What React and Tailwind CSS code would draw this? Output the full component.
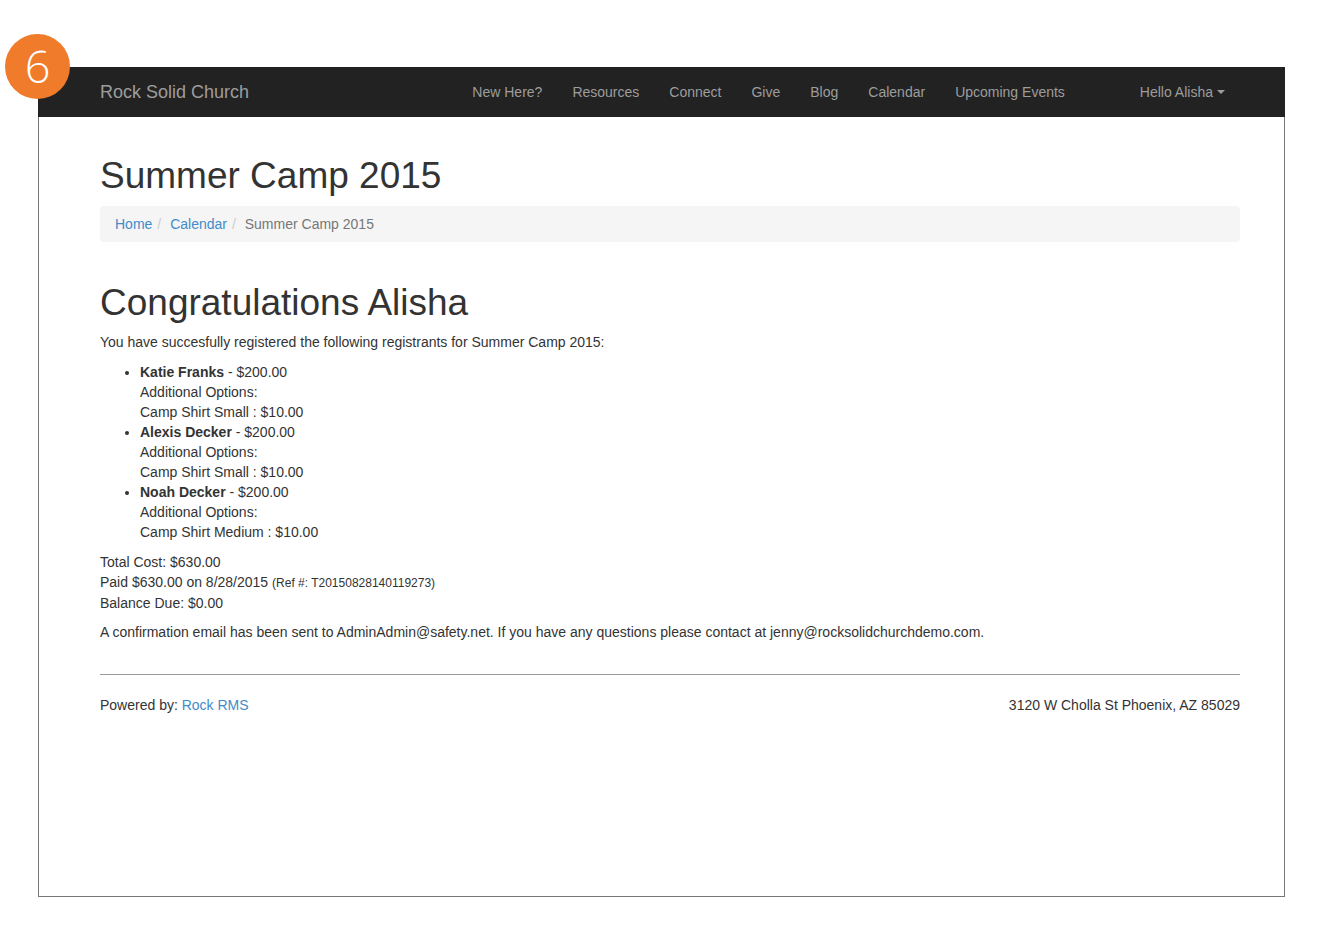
import React from "react";

const navItems = ["New Here?", "Resources", "Connect", "Give", "Blog", "Calendar", "Upcoming Events"];

const registrants = [
    { name: "Katie Franks", option: "Camp Shirt Small : $10.00" },
    { name: "Alexis Decker", option: "Camp Shirt Small : $10.00" },
    { name: "Noah Decker", option: "Camp Shirt Medium : $10.00" },
];

export default function App() {
    return (
        <div className="relative min-h-[952px] bg-white font-['Liberation_Sans',Arial,sans-serif] text-[14px] leading-[20px] text-[#333]">
            {/* Step badge */}
            <div className="absolute left-[5px] top-[34px] z-10 flex h-[65px] w-[65px] items-center justify-center rounded-full bg-[#ef7b2b] font-['Open_Sans',sans-serif] text-[45px] font-light leading-none text-white">
                <span className="-mt-[3px]">6</span>
            </div>

            <div className="ml-[38px] pt-[67px]">
                <div className="h-[830px] w-[1247px] border-x border-b border-[#777]">
                    {/* Navbar */}
                    <div className="-mx-px h-[50px] bg-[#222]">
                        <div className="ml-[62px] flex h-full w-[1140px] items-center">
                            <span className="text-[18px] text-[#9d9d9d]">Rock Solid Church</span>
                            <ul className="ml-auto flex">
                                {navItems.map((item) => (
                                    <li key={item} className="px-[15px] text-[#9d9d9d]">
                                        {item}
                                    </li>
                                ))}
                            </ul>
                            <div className="ml-[45px] flex items-center px-[15px] text-[#9d9d9d]">
                                Hello Alisha
                                <span className="ml-[4px] inline-block h-0 w-0 border-x-[4px] border-t-[4px] border-x-transparent border-t-[#9d9d9d]" />
                            </div>
                        </div>
                    </div>

                    {/* Content */}
                    <div className="ml-[61px] w-[1140px]">
                        <h1 className="mt-[39px] text-[37px] leading-[40px] text-[#333]">Summer Camp 2015</h1>

                        <div className="mt-[10px] flex h-[36px] items-center rounded bg-[#f5f5f5] px-[15px]">
                            <span className="text-[#428bca]">Home</span>
                            <span className="px-[5px] text-[#ccc]">/&nbsp;</span>
                            <span className="text-[#428bca]">Calendar</span>
                            <span className="px-[5px] text-[#ccc]">/&nbsp;</span>
                            <span className="text-[#777]">Summer Camp 2015</span>
                        </div>

                        <h1 className="mt-[41px] text-[37px] leading-[40px] text-[#333]">Congratulations Alisha</h1>

                        <p className="mt-[9px]">You have succesfully registered the following registrants for Summer Camp 2015:</p>

                        <ul className="mt-[10px] list-disc pl-[40px]">
                            {registrants.map((r) => (
                                <li key={r.name}>
                                    <strong className="font-bold">{r.name}</strong> - $200.00
                                    <br />
                                    Additional Options:
                                    <br />
                                    {r.option}
                                </li>
                            ))}
                        </ul>

                        <div className="mt-[10px]">
                            <div>Total Cost: $630.00</div>
                            <div>
                                Paid $630.00 on 8/28/2015 <small className="text-[12px]">(Ref #: T20150828140119273)</small>
                            </div>
                            <div>Balance Due: $0.00</div>
                        </div>

                        <p className="mt-[9px]">
                            A confirmation email has been sent to AdminAdmin@safety.net. If you have any questions please contact at jenny@rocksolidchurchdemo.com.
                        </p>

                        <hr className="mt-[32px] border-t border-[#9a9a9a]" />

                        <div className="mt-[20px] flex justify-between">
                            <span>
                                Powered by: <span className="text-[#428bca]">Rock RMS</span>
                            </span>
                            <span>3120 W Cholla St Phoenix, AZ 85029</span>
                        </div>
                    </div>
                </div>
            </div>
        </div>
    );
}
